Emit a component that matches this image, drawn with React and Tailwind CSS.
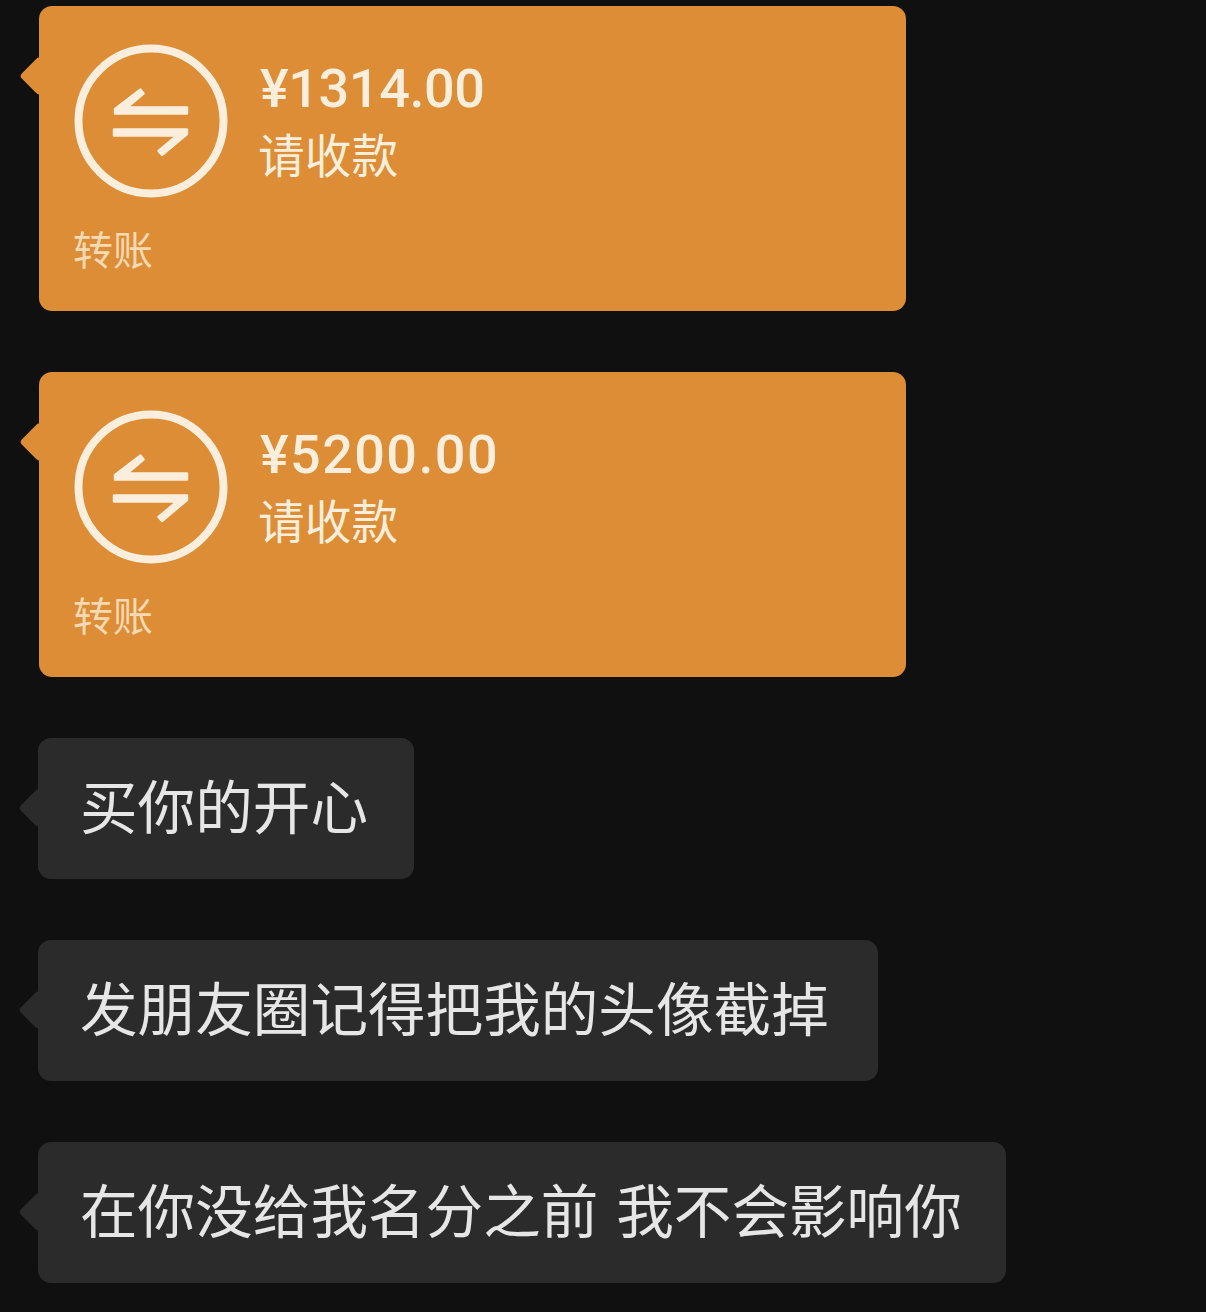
const cjk = '[font-family:"Noto_Sans_CJK_SC","Liberation_Sans",sans-serif]';

function Tail({ color, top }) {
  return <div className={`absolute left-[-14px] h-[28px] w-[28px] rotate-45 rounded-[4px] ${color} ${top}`} />;
}

function TransferIcon() {
  return (
    <svg width="154" height="154" viewBox="0 0 154 154" fill="none" className="shrink-0">
      <circle cx="77" cy="77" r="72.5" stroke="#fbeedd" strokeWidth="8" />
      <path
        d="M41 69.5H113V63.5H53L69.5 49.5L66.5 45.5L41 65Z"
        fill="#fbeedd"
        stroke="#fbeedd"
        strokeWidth="2.5"
        strokeLinejoin="round"
      />
      <path
        d="M40 85.5H113V90L88 111L84.5 107L103 91.5H40Z"
        fill="#fbeedd"
        stroke="#fbeedd"
        strokeWidth="2.5"
        strokeLinejoin="round"
      />
    </svg>
  );
}

function Transfer({ amount, tracking }) {
  return (
    <div className="relative ml-px h-[305px] w-[867px] rounded-[13px] bg-[#dc8d35] pl-[35px] pt-[38px]">
      <Tail color="bg-[#dc8d35]" top="top-[56px]" />
      <div className="flex items-start gap-[32px]">
        <TransferIcon />
        <div className="flex flex-col">
          <div className={`mt-[12px] font-['Roboto',sans-serif] text-[54px] font-medium leading-[66px] text-[#fbeedd] ${tracking}`}>
            {amount}
          </div>
          <div className={`${cjk} ml-[-2px] mt-[-2px] text-[46.7px] leading-[66px] text-[#fbeedd]`}>请收款</div>
        </div>
      </div>
      <div className={`${cjk} ml-[-1px] mt-[25px] text-[40px] leading-[50px] text-[#f7d9b4]`}>转账</div>
    </div>
  );
}

function Message({ width, children }) {
  return (
    <div className={`relative flex h-[141px] items-center rounded-[13px] bg-[#2b2b2b] pb-[8px] pl-[42px] ${width}`}>
      <Tail color="bg-[#2b2b2b]" top="top-[56px]" />
      <span className={`${cjk} relative whitespace-pre text-[57.6px] leading-none text-[#e6e6e6] [word-spacing:5px]`}>{children}</span>
    </div>
  );
}

export default function App() {
  return (
    <div className="flex h-[1312px] w-[1206px] flex-col gap-[61px] overflow-hidden bg-[#101011] pl-[38px] pt-[6px]">
      <Transfer amount="¥1314.00" tracking="tracking-[-0.4px]" />
      <Transfer amount="¥5200.00" tracking="tracking-[1.4px]" />
      <Message width="w-[376px]">买你的开心</Message>
      <Message width="w-[840px]">发朋友圈记得把我的头像截掉</Message>
      <Message width="w-[968px]">在你没给我名分之前 我不会影响你</Message>
    </div>
  );
}
